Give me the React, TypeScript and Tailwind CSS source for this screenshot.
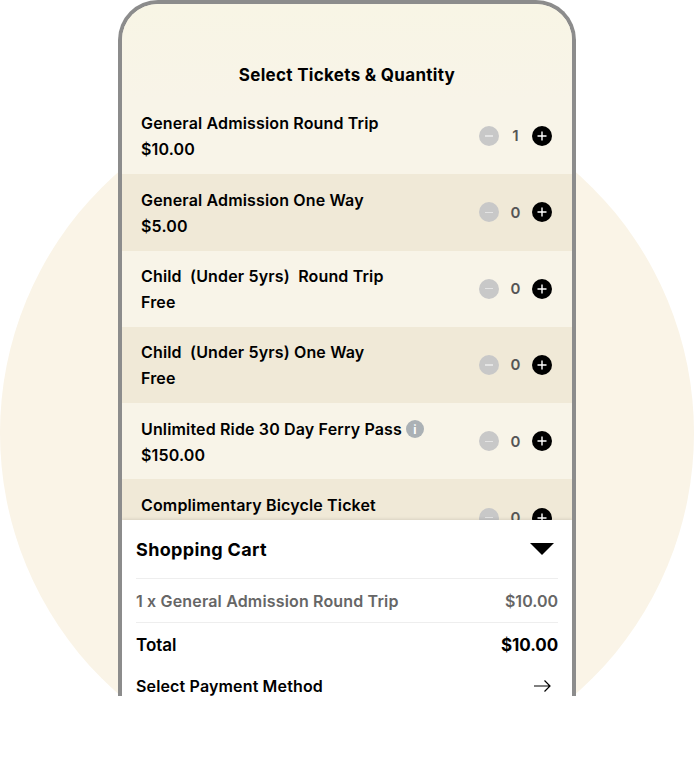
const tickets = [
  { name: "General Admission Round Trip", price: "$10.00", qty: 1 },
  { name: "General Admission One Way", price: "$5.00", qty: 0 },
  { name: "Child\u00a0\u00a0(Under 5yrs)\u00a0\u00a0Round Trip", price: "Free", qty: 0 },
  { name: "Child\u00a0\u00a0(Under 5yrs) One Way", price: "Free", qty: 0 },
  { name: "Unlimited Ride 30 Day Ferry Pass", price: "$150.00", qty: 0, info: true },
  { name: "Complimentary Bicycle Ticket", price: "Free", qty: 0 },
];

function Stepper({ qty }: { qty: number }) {
  return (
    <div className="flex items-center">
      <span className="flex h-5 w-5 items-center justify-center rounded-full bg-[#c8c8c8]">
        <span className="h-[1.5px] w-2 bg-[#e4e4e4]" />
      </span>
      <span className="w-[33px] pt-[1px] text-center text-[15px] font-semibold text-[#555]">{qty}</span>
      <span className="flex h-5 w-5 items-center justify-center rounded-full bg-black">
        <svg width="10" height="10" viewBox="0 0 10 10" fill="none" stroke="white" strokeWidth="1.4">
          <path d="M5 .5v9M.5 5h9" />
        </svg>
      </span>
    </div>
  );
}

export default function App() {
  return (
    <div className="h-[780px] w-[694px] bg-white font-['Inter',sans-serif] text-black">
      <div className="relative flex h-[696px] justify-center overflow-hidden">
        <div className="absolute left-0 top-[86px] h-[694px] w-[694px] rounded-full bg-[#faf4e7]" />
        <div className="relative flex h-[696px] w-[458px] flex-col overflow-hidden rounded-t-[40px] border-x-4 border-t-4 border-[#8c8c8c] bg-[#f8f4e8]">
          <div className="h-[94px] shrink-0 bg-gradient-to-b from-[#f8f5e5] to-[#f8f4e8] pt-[59px] text-center text-[17px] leading-6 font-bold tracking-[0.3px]">
            Select Tickets &amp; Quantity
          </div>
          <div className="h-[422px] shrink-0 overflow-hidden">
            {tickets.map((t, i) => (
              <div
                key={t.name}
                className={`flex h-[76.3px] items-center justify-between pl-[19px] pr-5 ${i % 2 ? "bg-[#f0e9d7]" : ""}`}
              >
                <div className="flex flex-col gap-[5px] pt-[1.5px] text-[16px] leading-[21px] font-semibold tracking-[0.15px]">
                  <div className="flex items-center gap-[4px]">
                    {t.name}
                    {t.info && (
                      <span className="flex h-[18px] w-[18px] items-center justify-center rounded-full bg-[#abb1b5] text-[12px] font-bold text-white">
                        i
                      </span>
                    )}
                  </div>
                  <div>{t.price}</div>
                </div>
                <Stepper qty={t.qty} />
              </div>
            ))}
          </div>
          <div className="flex-1 bg-white px-[14px] shadow-[0_-1px_3px_rgba(0,0,0,0.1)]">
            <div className="flex h-[59px] items-center justify-between border-b border-[#eeeeee] text-[18px] font-bold tracking-[0.35px]">
              Shopping Cart
              <span className="mr-[4px] h-0 w-0 border-x-[12.5px] border-t-[12.5px] border-x-transparent border-t-black" />
            </div>
            <div className="flex h-[44px] items-center justify-between border-b border-[#eeeeee] text-[16px] font-semibold tracking-[0.16px] text-[#666]">
              <span>1 x General Admission Round Trip</span>
              <span className="tracking-normal">$10.00</span>
            </div>
            <div className="flex h-[45px] items-center justify-between text-[17px] font-semibold">
              <span>Total</span>
              <span className="font-bold tracking-[-0.1px]">$10.00</span>
            </div>
            <div className="flex h-[36px] items-center justify-between text-[16px] font-semibold tracking-[0.15px]">
              <span>Select Payment Method</span>
              <svg className="mr-[7px]" width="17" height="12" viewBox="0 0 17 12" fill="none" stroke="black" strokeWidth="1.2">
                <path d="M0 6h16M10.5.5 16 6l-5.5 5.5" />
              </svg>
            </div>
          </div>
        </div>
      </div>
    </div>
  );
}
